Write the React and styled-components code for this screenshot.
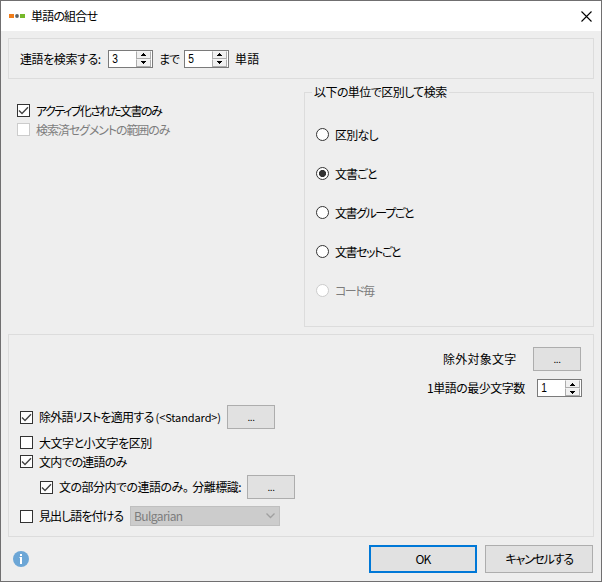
import { useState } from "react";
import styled, { createGlobalStyle } from "styled-components";

const scopes = [
  { id: "none", label: "区別なし", width: 42 },
  { id: "document", label: "文書ごと", width: 41 },
  { id: "group", label: "文書グループごと", width: 78 },
  { id: "set", label: "文書セットごと", width: 65 },
  { id: "code", label: "コード毎", width: 37, disabled: true },
];

const CheckBox = ({ checked, disabled, label, width, track }) => {
  const [isChecked, setIsChecked] = useState(Boolean(checked));

  return (
    <Option onClick={() => !disabled && setIsChecked(!isChecked)}>
      <Box $disabled={disabled}>
        {isChecked && (
          <svg width="11" height="11" viewBox="0 0 11 11">
            <path d="M1 5.4 L4 8.4 L10 2.2" fill="none" stroke="#444" strokeWidth="1.4" />
          </svg>
        )}
      </Box>
      <Text $width={width} $disabled={disabled} $track={track}>{label}</Text>
    </Option>
  );
};

const Spinner = ({ initial }) => {
  const [value, setValue] = useState(initial);

  return (
    <SpinnerFrame>
      <SpinnerValue>{value}</SpinnerValue>
      <Steps>
        <Step onClick={() => setValue(value + 1)}>
          <svg width="5" height="3" viewBox="0 0 5 3">
            <path d="M2 0h1v1h1v1h1v1H0V2h1V1h1z" />
          </svg>
        </Step>
        <Step onClick={() => setValue(Math.max(1, value - 1))}>
          <svg width="5" height="3" viewBox="0 0 5 3">
            <path d="M0 0h5v1H4v1H3v1H2V2H1V1H0z" />
          </svg>
        </Step>
      </Steps>
    </SpinnerFrame>
  );
};

const App = () => {
  const [scope, setScope] = useState("document");

  return (
    <>
      <GlobalStyle />
      <Window>
        <TitleBar>
          <svg width="16" height="5" viewBox="0 0 16 5">
            <rect width="5" height="4" fill="#f07d1a" />
            <circle cx="8" cy="2" r="1.9" fill="#5b6266" />
            <rect x="11" width="5" height="4" fill="#76b82a" />
          </svg>
          <Title>単語の組合せ</Title>
          <Close>
            <svg width="11" height="11" viewBox="0 0 11 11">
              <path d="M.5 .5 L10.5 10.5 M10.5 .5 L.5 10.5" stroke="#000" strokeWidth="1.1" />
            </svg>
          </Close>
        </TitleBar>

        <Body>
          <RangePanel>
            <Text $width={80}>連語を検索する:</Text>
            <Spinner initial={3} />
            <Text $width={19}>まで</Text>
            <Spinner initial={5} />
            <Text $width={23}>単語</Text>
          </RangePanel>

          <Columns>
            <Filters>
              <CheckBox checked label="アクティブ化された文書のみ" width={125} track={-1.5} />
              <CheckBox disabled label="検索済セグメントの範囲のみ" width={133} track={-1.5} />
            </Filters>
            <ScopeGroup>
              <Legend>
                <Text $width={132}>以下の単位で区別して検索</Text>
              </Legend>
              {scopes.map((item) => (
                <Option key={item.id} onClick={() => !item.disabled && setScope(item.id)}>
                  <Radio $checked={scope === item.id} $disabled={item.disabled} />
                  <Text $width={item.width} $disabled={item.disabled} $track={-1.5}>{item.label}</Text>
                </Option>
              ))}
            </ScopeGroup>
          </Columns>

          <OptionsPanel>
            <Row $height={24} $end $gap={18} $right={12}>
              <Text $width={72}>除外対象文字</Text>
              <MoreButton>...</MoreButton>
            </Row>
            <Row $height={18} $top={8} $end $gap={13} $right={11}>
              <Text $width={97}>1単語の最少文字数</Text>
              <Spinner initial={1} />
            </Row>
            <Row $height={24} $top={8}>
              <CheckBox
                checked
                label={<>除外語リストを適用する <Latin>(&lt;Standard&gt;)</Latin></>}
                width={182}
                track={-1.5}
              />
              <MoreButton>...</MoreButton>
            </Row>
            <Row $height={13} $top={7}>
              <CheckBox label="大文字と小文字を区別" width={112} />
            </Row>
            <Row $height={13} $top={6}>
              <CheckBox checked label="文内での連語のみ" width={87} />
            </Row>
            <Row $height={24} $top={7} $left={31} $gap={7}>
              <CheckBox
                checked
                label={<>文の部分内での連語のみ<Stop>。</Stop>分離標識:</>}
                width={181}
                track={-1.5}
              />
              <MoreButton>...</MoreButton>
            </Row>
            <Row $height={20} $top={7} $gap={7}>
              <CheckBox label="見出し語を付ける" width={84} />
              <Select>
                Bulgarian
                <svg width="9" height="6" viewBox="0 0 9 6">
                  <path d="M.5 .5 L4.5 4.5 L8.5 .5" fill="none" stroke="#a0a0a0" strokeWidth="1.3" />
                </svg>
              </Select>
            </Row>
          </OptionsPanel>

          <Footer>
            <svg width="16" height="16" viewBox="0 0 16 16">
              <circle cx="8" cy="8" r="8" fill="#6ca6d6" />
              <path d="M7 3h2v2H7zM6.5 6H9v7H7V7h-.5z" fill="#fff" />
            </svg>
            <Actions>
              <DialogButton $primary>OK</DialogButton>
              <DialogButton>
                <Text $width={67} $track={-1.5}>キャンセルする</Text>
              </DialogButton>
            </Actions>
          </Footer>
        </Body>
      </Window>
    </>
  );
};

export default App;

const GlobalStyle = createGlobalStyle`
  * {
    box-sizing: border-box;
  }

  body {
    margin: 0;
    color: #000;
    font-family: "Noto Sans CJK JP", sans-serif;
    font-size: 12px;
    line-height: 14px;
  }

  svg {
    display: block;
    flex: none;
  }

  button {
    font: inherit;
    color: inherit;
    padding: 0;
  }
`;

const Window = styled.div`
  width: 602px;
  height: 582px;
  display: flex;
  flex-direction: column;
  border: 1px solid #706f70;
  background: #eee;
`;

const TitleBar = styled.div`
  height: 30px;
  display: flex;
  align-items: center;
  padding: 0 9px 0 8px;
  background: #fff;
`;

const Title = styled.div`
  width: 66px;
  margin-left: 6px;
  letter-spacing: -1px;
  font-feature-settings: "palt";
  text-align-last: justify;
  white-space: nowrap;
`;

const Close = styled.button`
  margin-left: auto;
  border: 0;
  background: none;
`;

const Body = styled.div`
  flex: 1;
  display: flex;
  flex-direction: column;
  padding: 7px 7px 8px;
`;

const Text = styled.span`
  display: block;
  flex: none;
  width: ${({ $width }) => $width}px;
  color: ${({ $disabled }) => ($disabled ? "#7d7d7d" : "#000")};
  font-feature-settings: "palt";
  letter-spacing: ${({ $track = -1.2 }) => $track}px;
  text-align: justify;
  text-align-last: justify;
  white-space: nowrap;
`;

const Latin = styled.span`
  font-size: 11px;
  letter-spacing: -0.1px;
`;

const Stop = styled.span`
  margin-right: 4px;
`;

const Panel = styled.div`
  border: 1px solid #dcdcdc;
`;

const RangePanel = styled(Panel)`
  height: 41px;
  display: flex;
  align-items: center;
  gap: 6px;
  padding-left: 11px;

  & > :first-child {
    margin-right: 2px;
  }
`;

const Columns = styled.div`
  height: 235px;
  display: flex;
  justify-content: space-between;
  margin-top: 13px;
`;

const Filters = styled.div`
  display: flex;
  flex-direction: column;
  gap: 6px;
  padding: 12px 0 0 9px;
`;

const ScopeGroup = styled(Panel)`
  width: 290px;
  display: flex;
  flex-direction: column;
  gap: 26px;
  padding-left: 11px;
`;

const Legend = styled.div`
  align-self: flex-start;
  height: 14px;
  margin: -8px 0 3px -4px;
  padding: 0 3px 0 2px;
  background: #eee;
`;

const OptionsPanel = styled(Panel)`
  height: 203px;
  margin-top: 7px;
  padding-top: 12px;
`;

const Row = styled.div`
  height: ${({ $height }) => $height}px;
  display: flex;
  align-items: center;
  justify-content: ${({ $end }) => ($end ? "flex-end" : "flex-start")};
  gap: ${({ $gap = 6 }) => $gap}px;
  margin-top: ${({ $top = 0 }) => $top}px;
  padding-left: ${({ $left = 11 }) => $left}px;
  padding-right: ${({ $right = 0 }) => $right}px;
`;

const Option = styled.div`
  height: 13px;
  display: flex;
  align-items: center;
  gap: 6px;
`;

const Box = styled.span`
  width: 13px;
  height: 13px;
  flex: none;
  border: 1px solid ${({ $disabled }) => ($disabled ? "#ccc" : "#333")};
  background: #fff;
`;

const Radio = styled.span`
  width: 13px;
  height: 13px;
  flex: none;
  border: 1px solid ${({ $disabled }) => ($disabled ? "#ccc" : "#333")};
  border-radius: 50%;
  background: ${({ $checked }) =>
    $checked ? "radial-gradient(circle, #333 3.2px, #fff 3.9px)" : "#fff"};
`;

const SpinnerFrame = styled.div`
  width: 45px;
  height: 18px;
  flex: none;
  display: flex;
  justify-content: space-between;
  padding-right: 1px;
  border: 1px solid #7a7a7a;
  background: #fff;
`;

const SpinnerValue = styled.span`
  padding-left: 3px;
  font-family: "Liberation Sans", sans-serif;
  line-height: 17px;
  transform: scaleX(0.85);
`;

const Steps = styled.div`
  width: 15px;
  height: 16px;
  display: flex;
  flex-direction: column;
  background: #eee;
`;

const Step = styled.button`
  height: 8px;
  display: flex;
  align-items: center;
  justify-content: center;
  border: 1px solid #acacac;
  border-top-color: #f4f4f4;
  background: #f0f0f0;
`;

const MoreButton = styled.button`
  width: 48px;
  height: 24px;
  flex: none;
  border: 1px solid #adadad;
  background: #e1e1e1;
  font-size: 10px;
  letter-spacing: -0.5px;
`;

const Select = styled.div`
  width: 150px;
  height: 20px;
  display: flex;
  align-items: center;
  justify-content: space-between;
  padding: 0 4px 0 3px;
  border: 1px solid #bfbfbf;
  background: #ccc;
  color: #7d7d7d;
  letter-spacing: -0.6px;
`;

const Footer = styled.div`
  height: 28px;
  display: flex;
  align-items: center;
  justify-content: space-between;
  margin-top: 8px;
  padding: 0 1px 0 5px;
`;

const Actions = styled.div`
  display: flex;
  gap: 8px;
`;

const DialogButton = styled.button`
  width: 108px;
  height: 28px;
  display: flex;
  align-items: center;
  justify-content: center;
  border: ${({ $primary }) => ($primary ? "2px solid #0078d7" : "1px solid #adadad")};
  background: #e1e1e1;
  letter-spacing: -0.8px;
`;
